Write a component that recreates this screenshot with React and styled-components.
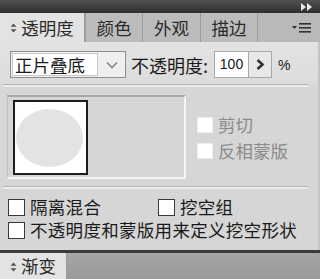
import React from 'react'
import styled, { createGlobalStyle } from 'styled-components'

const Global = createGlobalStyle`
    html, body {
        margin: 0;
        padding: 0;
        background: #d6d6d6;
    }
    body {
        font-family: "Noto Sans CJK SC", "Noto Sans", sans-serif;
    }
`

const UpDown = () => (
    <svg width="7" height="10" viewBox="0 0 7 10">
        <path d="M3.5 0.5 L6.5 3.8 L0.5 3.8 Z M3.5 9.5 L6.5 6.2 L0.5 6.2 Z" fill="#555" />
    </svg>
)

const App = () => {
    return (
        <>
            <Global />
            <StyledPanel>
                <TopBar>
                    <svg width="12" height="8" viewBox="0 0 12 8">
                        <path d="M0 0 L5 4 L0 8 Z M6 0 L11 4 L6 8 Z" fill="#e8e8e8" />
                    </svg>
                </TopBar>
                <TabRow>
                    <Tab active width={85}>
                        <UpDown />
                        <span>透明度</span>
                    </Tab>
                    <Tab width={57}>颜色</Tab>
                    <Tab width={58}>外观</Tab>
                    <Tab width={57}>描边</Tab>
                    <TabFill>
                        <svg width="20" height="12" viewBox="0 0 20 12">
                            <path d="M0 4 L5 4 L2.5 7 Z" fill="#333" />
                            <rect x="7" y="1" width="12" height="1.6" fill="#333" />
                            <rect x="7" y="5" width="12" height="1.6" fill="#333" />
                            <rect x="7" y="9" width="12" height="1.6" fill="#333" />
                        </svg>
                    </TabFill>
                </TabRow>
                <Body>
                    <BlendRow>
                        <Select>
                            <SelectField>正片叠底</SelectField>
                            <SelectArrow>
                                <svg width="12" height="8" viewBox="0 0 12 8">
                                    <path d="M1 1.5 L6 6.5 L11 1.5" fill="none" stroke="#888" strokeWidth="1.6" />
                                </svg>
                            </SelectArrow>
                        </Select>
                        <Label>不透明度:</Label>
                        <NumberBox>100</NumberBox>
                        <StepButton>
                            <svg width="9" height="11" viewBox="0 0 9 11">
                                <path d="M1.5 1 L6.5 5.5 L1.5 10" fill="none" stroke="#333" strokeWidth="2.6" />
                            </svg>
                        </StepButton>
                        <Percent>%</Percent>
                    </BlendRow>
                    <Divider />
                    <MaskRow>
                        <ThumbWell>
                            <Thumb>
                                <Ellipse />
                            </Thumb>
                        </ThumbWell>
                        <MaskOptions>
                            <CheckRow disabled>
                                <Box disabled />
                                <span>剪切</span>
                            </CheckRow>
                            <CheckRow disabled>
                                <Box disabled />
                                <span>反相蒙版</span>
                            </CheckRow>
                        </MaskOptions>
                    </MaskRow>
                    <Divider />
                    <Options>
                        <OptionLine>
                            <CheckRow width={150}>
                                <Box />
                                <span>隔离混合</span>
                            </CheckRow>
                            <CheckRow>
                                <Box />
                                <span>挖空组</span>
                            </CheckRow>
                        </OptionLine>
                        <OptionLine>
                            <CheckRow>
                                <Box />
                                <span>不透明度和蒙版用来定义挖空形状</span>
                            </CheckRow>
                        </OptionLine>
                    </Options>
                </Body>
                <BottomTabs>
                    <Tab active width={67}>
                        <UpDown />
                        <span>渐变</span>
                    </Tab>
                    <BottomFill />
                </BottomTabs>
            </StyledPanel>
        </>
    )
}

export default App

const StyledPanel = styled.div`
    width: 320px;
    height: 279px;
    display: flex;
    flex-direction: column;
    overflow: hidden;
    background: #d6d6d6;
    color: #1a1a1a;
`

const TopBar = styled.div`
    height: 13px;
    flex: none;
    background: linear-gradient(#505050, #2f2f2f);
    display: flex;
    justify-content: flex-end;
    align-items: center;
    padding-right: 7px;
`

const TabRow = styled.div`
    height: 29px;
    flex: none;
    display: flex;
    background: #b9b9b9;
`

const Tab = styled.div`
    width: ${p => p.width}px;
    flex: none;
    box-sizing: border-box;
    display: flex;
    align-items: center;
    justify-content: center;
    gap: 4px;
    font-size: 17.5px;
    color: #2a2a2a;
    background: ${p => (p.active ? '#e3e3e3' : '#bcbcbc')};
    border-left: ${p => (p.active ? 'none' : '1px solid #9c9c9c')};
    border-right: ${p => (p.active ? '1px solid #9c9c9c' : 'none')};
    line-height: 1;

    svg {
        margin-top: 1px;
    }
`

const TabFill = styled.div`
    flex: 1;
    border-left: 1px solid #9c9c9c;
    display: flex;
    align-items: center;
    justify-content: flex-end;
    padding-right: 8px;
`

const Body = styled.div`
    flex: 1;
    display: flex;
    flex-direction: column;
    border-right: 2px solid #c4c4c4;
    background: #d6d6d6;
`

const BlendRow = styled.div`
    display: flex;
    align-items: center;
    padding: 9px 0 6px 10px;
    background: linear-gradient(#e3e3e3, #dcdcdc);
`

const Select = styled.div`
    display: flex;
    height: 27px;
    width: 116px;
    box-sizing: border-box;
    border: 1px solid #8e8e8e;
    background: #efefef;
`

const SelectField = styled.div`
    width: 86px;
    margin: 1px;
    background: #fff;
    border: 1px solid #c8c8c8;
    box-sizing: border-box;
    font-size: 17.5px;
    line-height: 22px;
    padding-left: 2px;
`

const SelectArrow = styled.div`
    flex: 1;
    display: flex;
    align-items: center;
    justify-content: center;
    padding-top: 1px;
`

const Label = styled.div`
    font-size: 18px;
    margin-left: 5px;
    margin-right: 6px;
`

const NumberBox = styled.div`
    width: 35px;
    height: 27px;
    box-sizing: border-box;
    border: 1px solid #a8a8a8;
    background: #fff;
    font-family: "Liberation Sans", Arial, sans-serif;
    font-size: 14px;
    line-height: 25px;
    text-align: center;
`

const StepButton = styled.div`
    width: 23px;
    height: 27px;
    box-sizing: border-box;
    border: 1px solid #a8a8a8;
    border-left: none;
    background: #e8e8e8;
    display: flex;
    align-items: center;
    justify-content: center;
`

const Percent = styled.div`
    font-family: "Liberation Sans", Arial, sans-serif;
    font-size: 14px;
    margin-left: 6px;
`

const Divider = styled.div`
    height: 0;
    margin: 0 10px 0 3px;
    border-top: 1px solid #b4b4b4;
    border-bottom: 2px solid #ededed;
`

const MaskRow = styled.div`
    display: flex;
    align-items: center;
    padding: 8px 0 7px 7px;
    height: 84px;
`

const ThumbWell = styled.div`
    width: 179px;
    height: 84px;
    box-sizing: border-box;
    border-top: 2px solid #a8a8a8;
    border-left: 1px solid #c0c0c0;
    border-right: 2px solid #f4f4f4;
    border-bottom: 2px solid #f4f4f4;
    background: #d5d5d5;
    padding: 3px 0 0 5px;
`

const Thumb = styled.div`
    width: 75px;
    height: 75px;
    box-sizing: border-box;
    border: 2px solid #1c1c1c;
    background: #fff;
    display: flex;
    align-items: center;
    justify-content: center;
`

const Ellipse = styled.div`
    width: 67px;
    height: 58px;
    border-radius: 50%;
    background: #e4e2e2;
    margin-right: 2px;
`

const MaskOptions = styled.div`
    display: flex;
    flex-direction: column;
    gap: 8px;
    margin-left: 11px;
    margin-top: 2px;
`

const CheckRow = styled.label`
    display: flex;
    align-items: center;
    gap: 5px;
    width: ${p => (p.width ? `${p.width}px` : 'auto')};
    font-size: 17.5px;
    line-height: 18px;
    white-space: nowrap;
    color: ${p => (p.disabled ? '#8a8a8a' : '#1a1a1a')};
    letter-spacing: ${p => (p.disabled ? '0' : '0.3px')};
`

const Box = styled.span`
    width: ${p => (p.disabled ? 16 : 17)}px;
    height: ${p => (p.disabled ? 16 : 17)}px;
    box-sizing: border-box;
    flex: none;
    background: #fff;
    border: ${p => (p.disabled ? '1px solid #ececec' : '1.5px solid #3a3a3a')};
`

const Options = styled.div`
    display: flex;
    flex-direction: column;
    gap: 5px;
    padding: 9px 0 0 8px;
    flex: 1;
`

const OptionLine = styled.div`
    display: flex;
    align-items: center;
`

const BottomTabs = styled.div`
    height: 26px;
    flex: none;
    display: flex;
    border-top: 3px solid #3c3c3c;
    background: #a2a2a2;
`

const BottomFill = styled.div`
    flex: 1;
    background: linear-gradient(#a6a6a6, #9a9a9a);
`
